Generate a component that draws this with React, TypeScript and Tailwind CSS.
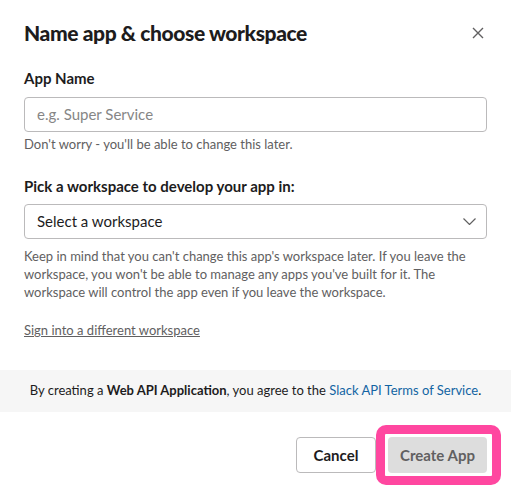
import React from "react";

function CloseIcon() {
  return (
    <svg width="12" height="12" viewBox="0 0 12 12" fill="none" stroke="#616061" strokeWidth="1.4">
      <path d="M1 1l10 10M11 1L1 11" />
    </svg>
  );
}

function Chevron() {
  return (
    <svg width="13" height="7" viewBox="0 0 13 7" fill="none" stroke="#616061" strokeWidth="1.2">
      <path d="M0.5 0.5l6 6 6-6" />
    </svg>
  );
}

export default function App() {
  return (
    <div
      className="relative w-[511px] h-[493px] bg-white text-[#1d1c1d] overflow-hidden"
      style={{ fontFamily: "Lato, 'Noto Sans', sans-serif" }}
    >
      <div className="px-6 pt-[17px]">
        <div className="flex items-center justify-between h-[32px]">
          <h1 className="text-[21px] font-black leading-[32px] tracking-[-0.4px]">
            Name app &amp; choose workspace
          </h1>
          <button className="w-[26px] h-[26px] flex items-center justify-center -mr-[4px]">
            <CloseIcon />
          </button>
        </div>

        <div className="mt-[18px]">
          <label className="block text-[15px] font-bold leading-[22px]">App Name</label>
          <div className="mt-[8px] h-[35px] rounded-[4px] border border-[#bbbabb] flex items-center px-3">
            <span className="text-[15px] text-[#868686]">e.g. Super Service</span>
          </div>
          <p className="mt-[3px] text-[13px] leading-[18px] text-[#616061]">
            Don't worry - you'll be able to change this later.
          </p>
        </div>

        <div className="mt-[22px]">
          <label className="block text-[15px] font-bold leading-[22px]">
            Pick a workspace to develop your app in:
          </label>
          <div className="mt-[7px] h-[35px] rounded-[4px] border border-[#bbbabb] flex items-center justify-between pl-3 pr-[10px]">
            <span className="text-[15px] text-[#1d1c1d]">Select a workspace</span>
            <Chevron />
          </div>
          <p className="mt-[8px] text-[13px] leading-[18px] text-[#616061]">
            Keep in mind that you can't change this app's workspace later. If you leave the workspace,
            you won't be able to manage any apps you've built for it. The workspace will control the
            app even if you leave the workspace.
          </p>
        </div>

        <div className="mt-[16px]">
          <a className="text-[13px] leading-[18px] text-[#616061] underline">
            Sign into a different workspace
          </a>
        </div>
      </div>

      <div className="mt-[29px] h-[42px] bg-[#f6f6f6] flex items-center justify-center text-[13px] text-[#1d1c1d]">
        <span>
          By creating a <b className="font-bold">Web API Application</b>, you agree to the{" "}
          <a className="text-[#1264a3]">Slack API Terms of Service</a>.
        </span>
      </div>

      <div className="flex justify-end gap-3 px-6 mt-[25px]">
        <button className="h-[36px] w-[80px] rounded-[4px] border border-[#bbbabb] bg-white text-[15px] font-bold text-[#1d1c1d]">
          Cancel
        </button>
        <div className="relative">
          <button className="h-[36px] w-[99px] rounded-[4px] bg-[#dddddd] text-[15px] font-bold text-[#616061]">
            Create App
          </button>
          <div className="absolute -left-[12px] -top-[12px] -right-[14px] -bottom-[12px] rounded-[10px] border-[9px] border-[#ff47a0] pointer-events-none" />
        </div>
      </div>
    </div>
  );
}
